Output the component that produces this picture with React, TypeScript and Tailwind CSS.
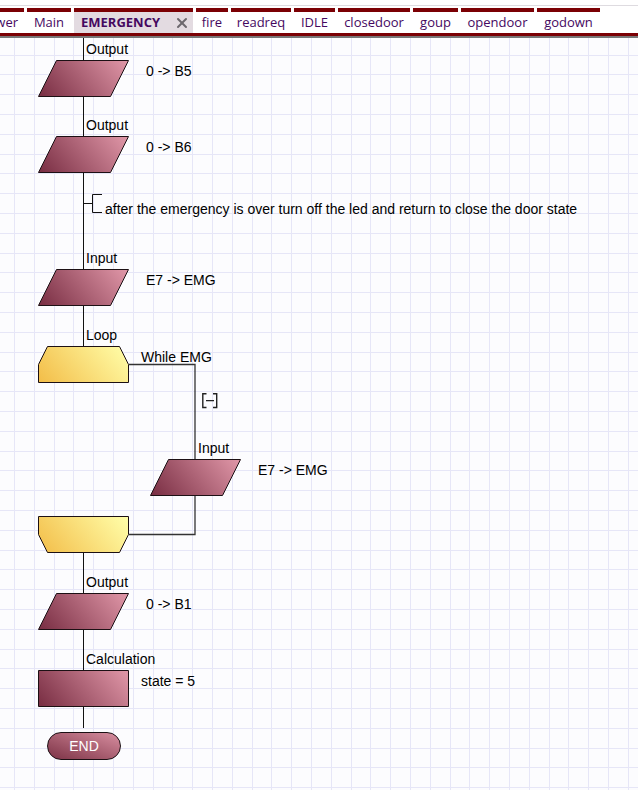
import { X } from "lucide-react";

type Tab = { name: string; width: string; active?: boolean };

const tabs: Tab[] = [
  { name: "Main", width: "w-11" },
  { name: "EMERGENCY", width: "w-[119px]", active: true },
  { name: "fire", width: "w-8" },
  { name: "readreq", width: "w-15" },
  { name: "IDLE", width: "w-[41px]" },
  { name: "closedoor", width: "w-18" },
  { name: "goup", width: "w-[45px]" },
  { name: "opendoor", width: "w-[73px]" },
  { name: "godown", width: "w-[63px]" },
];

const shapes = {
  io: "18.5,0.5 90.5,0.5 72.5,36.5 0.5,36.5",
  loopStart: "9.5,0.5 81.5,0.5 90.5,18.5 90.5,36.5 0.5,36.5 0.5,18.5",
  loopEnd: "0.5,0.5 90.5,0.5 90.5,18.5 81.5,36.5 9.5,36.5 0.5,18.5",
  calc: "0.5,0.5 90.5,0.5 90.5,36.5 0.5,36.5",
};

type Node = {
  shape: keyof typeof shapes;
  at: string;
  label?: string;
  note?: string;
  noteAt?: string;
};

const wide = "left-[108px]";
const near = "left-[103px]";

const nodes: Node[] = [
  { shape: "io", at: "left-[38px] top-[22px]", label: "Output", note: "0 -> B5", noteAt: wide },
  { shape: "io", at: "left-[38px] top-[98px]", label: "Output", note: "0 -> B6", noteAt: wide },
  { shape: "io", at: "left-[38px] top-[231px]", label: "Input", note: "E7 -> EMG", noteAt: wide },
  { shape: "loopStart", at: "left-[38px] top-[308px]", label: "Loop", note: "While EMG", noteAt: near },
  { shape: "io", at: "left-[150px] top-[421px]", label: "Input", note: "E7 -> EMG", noteAt: wide },
  { shape: "loopEnd", at: "left-[38px] top-[478px]" },
  { shape: "io", at: "left-[38px] top-[555px]", label: "Output", note: "0 -> B1", noteAt: wide },
  { shape: "calc", at: "left-[38px] top-[632px]", label: "Calculation", note: "state = 5", noteAt: near },
];

const GRID = 19.8;
const columns = Array.from({ length: 130 }, (_, i) => Math.round(14 + i * GRID));
const rows = Array.from({ length: 80 }, (_, i) => Math.round(16.6 + i * GRID));

function Grid() {
  return (
    <svg className="absolute inset-0 h-full w-full" aria-hidden="true">
      <g fill="#e6e6f7">
        {columns.map((x) => (
          <rect key={x} x={x} y="0" width="1" height="100%" />
        ))}
        {rows.map((y) => (
          <rect key={y} x="0" y={y} width="100%" height="1" />
        ))}
      </g>
    </svg>
  );
}

function Connectors() {
  return (
    <svg className="absolute top-0 left-0" width="260" height="700" fill="none" stroke="#111" aria-hidden="true">
      <path d="M83.5 0V22M83.5 59V98M83.5 135V231M83.5 268V308M83.5 515V555M83.5 592V632M83.5 669V690" />
      <path d="M83.5 165.5H92.5M102 156.5H92.5V174.5H102" />
      <path d="M129 326.5H195V421M195 458V496.5H129" stroke="#333" strokeWidth="1.3" />
    </svg>
  );
}

function FlowNode({ shape, at, label, note, noteAt }: Node) {
  const yellow = shape === "loopStart" || shape === "loopEnd";
  return (
    <div className={`absolute ${at}`}>
      <svg className="block" width="91" height="37" aria-hidden="true">
        <polygon points={shapes[shape]} fill={yellow ? "url(#gold)" : "url(#rose)"} stroke="#1c1014" />
      </svg>
      {label && <span className="absolute -top-[19px] left-12">{label}</span>}
      {note && <span className={`absolute top-[3px] ${noteAt}`}>{note}</span>}
    </div>
  );
}

export default function App() {
  return (
    <div className="flex min-h-screen flex-col overflow-hidden bg-white pb-0.5">
      <header className="border-b-2 border-[#777] pt-[5px]">
        <nav className="flex gap-[3px] overflow-hidden border-t border-b-3 border-t-[#dedbe0] border-b-[#7b0004] pt-0.5 font-['Open_Sans',sans-serif] text-[13px] leading-[21px] text-[#45085f]">
          <button className="flex h-[25px] w-6 shrink-0 justify-end border-t-4 border-[#7b0004] pr-1.5">
            <span>power</span>
          </button>
          {tabs.map((tab) =>
            tab.active ? (
              <div key={tab.name} className={`flex h-[25px] shrink-0 items-center justify-between border-t-4 border-[#7b0004] bg-[#e3dbe1] pr-[3px] pl-[7px] ${tab.width}`}>
                <button className="font-bold">{tab.name}</button>
                <button aria-label="Close tab" className="text-[#6d686e]">
                  <X size={16} strokeWidth={3} />
                </button>
              </div>
            ) : (
              <button key={tab.name} className={`flex h-[25px] shrink-0 justify-center border-t-4 border-[#7b0004] ${tab.width}`}>
                {tab.name}
              </button>
            ),
          )}
        </nav>
      </header>

      <main className="relative min-h-[740px] flex-1 overflow-hidden bg-[#fcfcfe] font-['Liberation_Sans',Arial,sans-serif] text-sm leading-4 whitespace-nowrap text-black">
        <Grid />
        <svg className="absolute h-0 w-0" aria-hidden="true">
          <defs>
            <linearGradient id="rose" gradientUnits="userSpaceOnUse" x1="12" y1="46" x2="78" y2="-8">
              <stop offset="0" stopColor="#7b3045" />
              <stop offset="1" stopColor="#dc93a4" />
            </linearGradient>
            <linearGradient id="gold" gradientUnits="userSpaceOnUse" x1="12" y1="46" x2="78" y2="-8">
              <stop offset="0" stopColor="#f3bf4b" />
              <stop offset="1" stopColor="#fffca6" />
            </linearGradient>
          </defs>
        </svg>
        <Connectors />
        {nodes.map((node, i) => (
          <FlowNode key={i} {...node} />
        ))}
        <p className="absolute top-[163px] left-[105px]">
          after the emergency is over turn off the led and return to close the door state
        </p>
        <button aria-label="Collapse loop" className="absolute top-[355px] left-[202px]">
          <svg className="block" width="16" height="16" fill="none" stroke="#222" strokeWidth="1.4" aria-hidden="true">
            <path d="M4.5 0.8H0.8V14.5H4.5M11 0.8H14.7V14.5H11M4 7.6H12" />
          </svg>
        </button>
        <div className="absolute top-[694px] left-[47px] flex h-7 w-[74px] items-center justify-center rounded-full border border-[#1c1014] bg-linear-to-tr from-[#7d3347] to-[#d88fa1] text-white">
          END
        </div>
      </main>
    </div>
  );
}
